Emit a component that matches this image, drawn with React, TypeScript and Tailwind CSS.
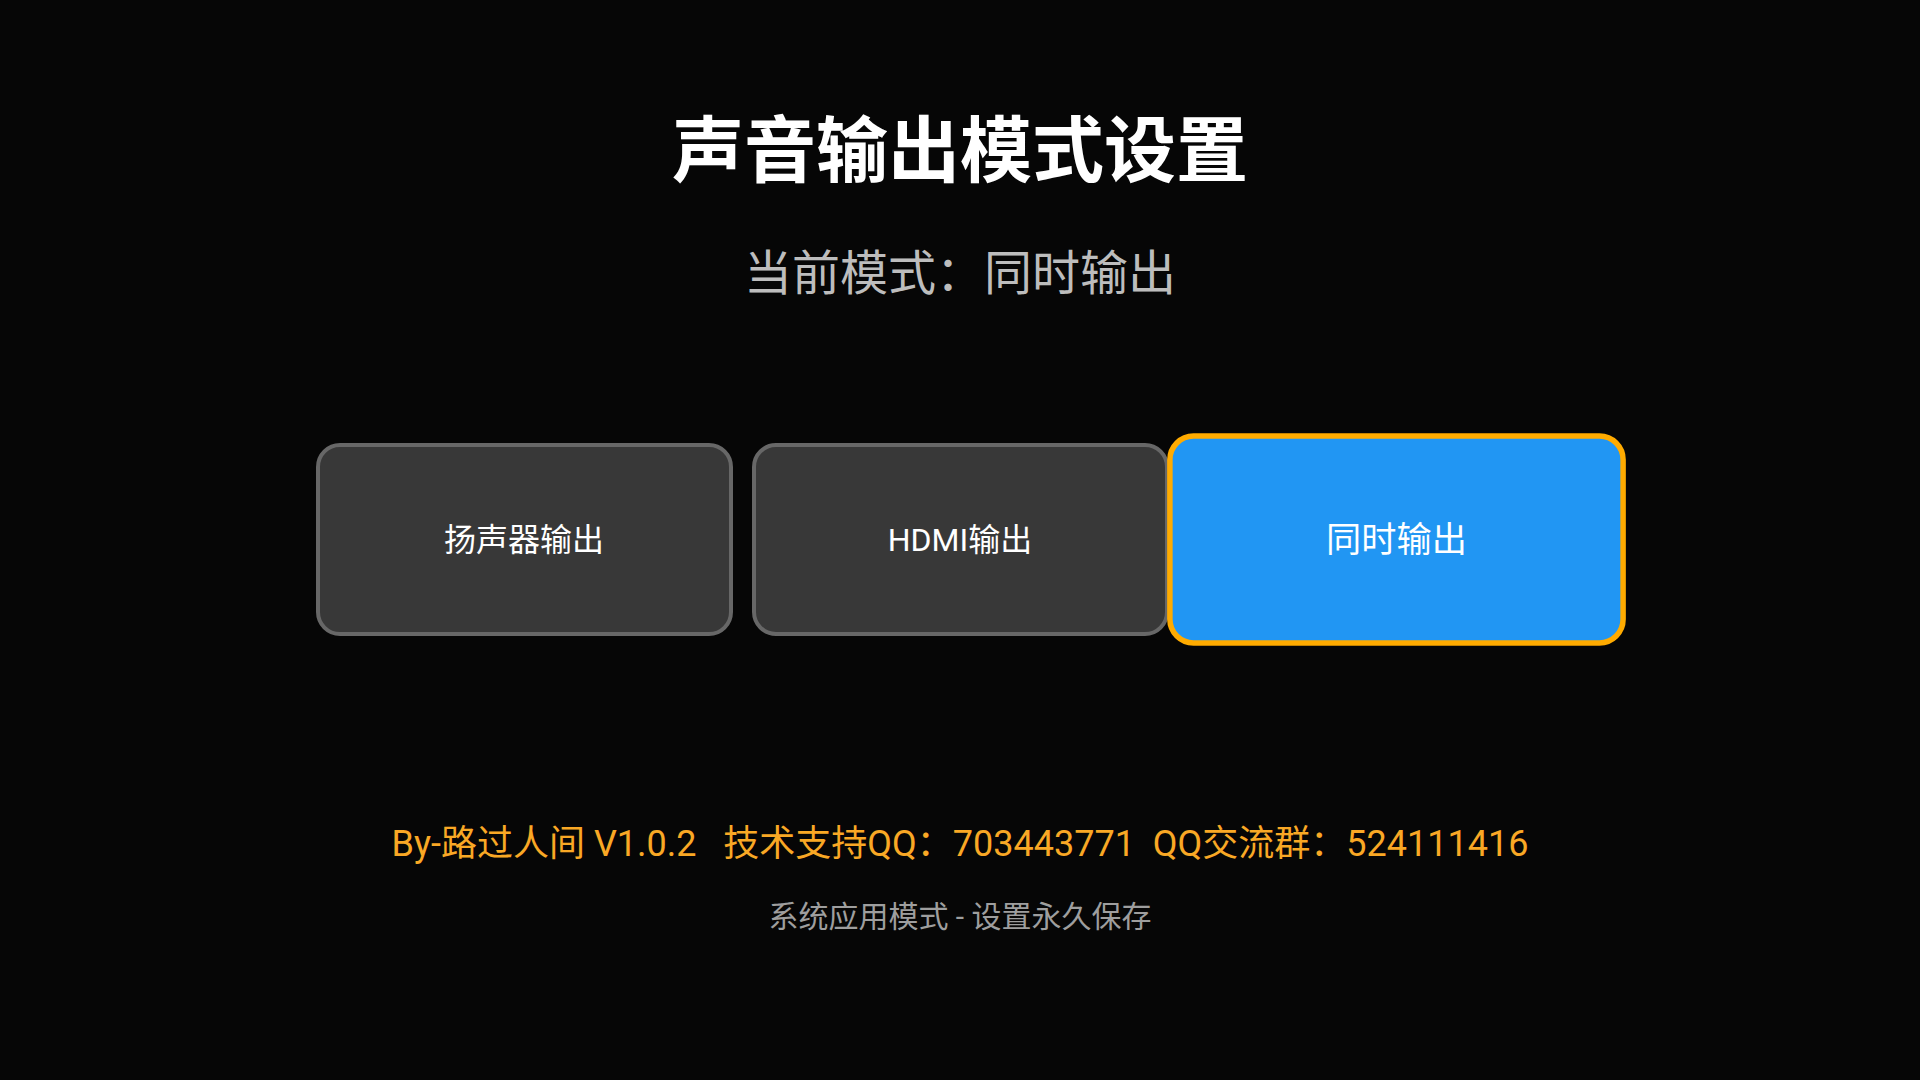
const modes = [
  { label: "扬声器输出", active: false },
  { label: "HDMI输出", active: false },
  { label: "同时输出", active: true },
];

export default function App() {
  return (
    <div
      className="w-full h-[1080px] bg-[#060606] flex flex-col items-center overflow-hidden"
      style={{ fontFamily: 'Roboto, "Noto Sans CJK SC", sans-serif' }}
    >
      <h1 className="mt-[109px] text-[72px] leading-[86px] font-bold text-white">
        声音输出模式设置
      </h1>
      <p className="mt-[51px] text-[48px] leading-[56px] text-[#bdbdbd]">
        当前模式：同时输出
      </p>

      <div className="mt-[141px] flex flex-row gap-[19px]">
        {modes.map((m) =>
          m.active ? (
            <button
              key={m.label}
              className="w-[417px] h-[193px] scale-110 rounded-[24px] border-[5px] border-[#ffab00] bg-[#2196f3] text-white text-[32px] flex items-center justify-center"
            >
              {m.label}
            </button>
          ) : (
            <button
              key={m.label}
              className="w-[417px] h-[193px] rounded-[24px] border-4 border-[#676767] bg-[#383838] text-white text-[32px] flex items-center justify-center"
            >
              {m.label}
            </button>
          )
        )}
      </div>

      <p className="mt-[186px] text-[36px] leading-[44px] text-[#f9a825] whitespace-pre">
        {"By-路过人间 V1.0.2   技术支持QQ：703443771  QQ交流群：524111416"}
      </p>
      <p className="mt-[33px] text-[30px] leading-[36px] text-[#9e9e9e]">
        系统应用模式 - 设置永久保存
      </p>
    </div>
  );
}
